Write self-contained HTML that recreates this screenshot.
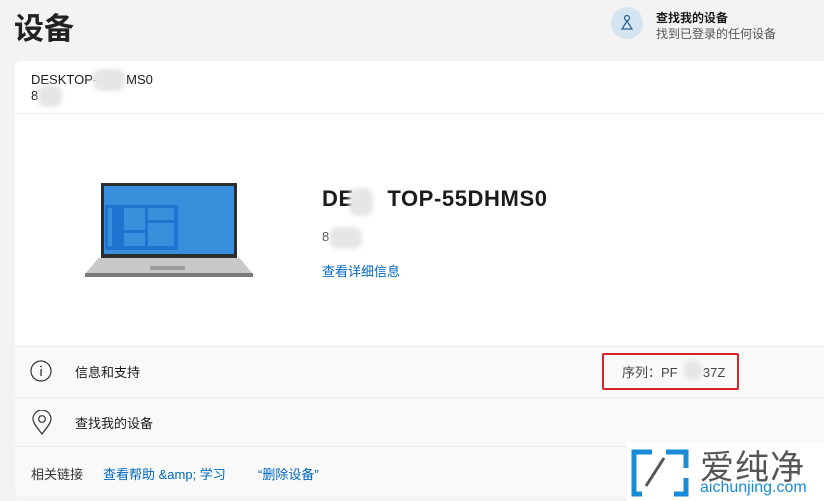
<!DOCTYPE html>
<html><head><meta charset="utf-8"><style>
body{margin:0;width:824px;height:501px;background:#f3f3f3;font-family:"Liberation Sans","Noto Sans CJK SC",sans-serif;position:relative;overflow:hidden;color:#1b1b1b}
.a{position:absolute}
.blur{position:absolute;background:#e6e6e6;border-radius:8px;filter:blur(2px)}
</style></head><body>
<div class="a" style="left:14px;top:4px;font-size:30px;font-weight:bold;color:#222">设备</div>
<div class="a" style="left:611px;top:7px;width:32px;height:32px;border-radius:50%;background:#d5e4f1"></div>
<svg class="a" style="left:619px;top:14px" width="16" height="18" viewBox="0 0 16 18"><circle cx="8" cy="4" r="2.5" fill="none" stroke="#2b5f8f" stroke-width="1.2"/><path d="M8 7 L3 15 H13 Z" fill="none" stroke="#2b5f8f" stroke-width="1.2"/></svg>
<div class="a" style="left:656px;top:9px;font-size:12px;font-weight:bold">查找我的设备</div>
<div class="a" style="left:656px;top:25px;font-size:12px;color:#555">找到已登录的任何设备</div>

<div class="a" style="left:15px;top:61px;width:820px;height:436px;background:#fff;border-radius:6px;overflow:hidden">
 <div class="a" style="left:16px;top:11px;font-size:13px">DESKTOP-5&nbsp;&nbsp;&nbsp;&nbsp;&nbsp;&nbsp;MS0</div>
 <div class="a" style="left:16px;top:27px;font-size:13px">8</div>
 <div class="blur" style="left:78px;top:8px;width:32px;height:22px"></div>
 <div class="blur" style="left:23px;top:24px;width:24px;height:22px"></div>
 <div class="a" style="left:0;top:52px;width:820px;height:1px;background:#ececec"></div>
 <div class="a" style="left:0;top:285px;width:820px;height:151px;background:#f9f9f9"></div>
 <div class="a" style="left:0;top:285px;width:820px;height:1px;background:#ececec"></div>
 <div class="a" style="left:0;top:336px;width:820px;height:1px;background:#ececec"></div>
 <div class="a" style="left:0;top:385px;width:820px;height:1px;background:#ececec"></div>
</div>

<!-- laptop -->
<div class="a" style="left:101px;top:183px;width:136px;height:75px;background:#2d2d2d"></div>
<div class="a" style="left:104px;top:186px;width:130px;height:68px;background:#3a8fdc"></div>
<div class="a" style="left:105px;top:205px;width:73px;height:45px;background:#1f74cf"></div>
<div class="a" style="left:124px;top:208px;width:21px;height:22px;background:#3a8fdc"></div>
<div class="a" style="left:124px;top:233px;width:21px;height:13px;background:#3a8fdc"></div>
<div class="a" style="left:148px;top:208px;width:26px;height:12px;background:#3a8fdc"></div>
<div class="a" style="left:148px;top:223px;width:26px;height:23px;background:#3a8fdc"></div>
<div class="a" style="left:108px;top:208px;width:4px;height:38px;background:#3a8fdc"></div>
<div class="a" style="left:85px;top:258px;width:168px;height:16px;background:#c8c8c8;clip-path:polygon(8% 0,92% 0,100% 100%,0 100%)"></div>
<div class="a" style="left:150px;top:266px;width:35px;height:4px;background:#9d9d9d"></div>
<div class="a" style="left:85px;top:273px;width:168px;height:4px;background:#7a7a7a"></div>

<div class="a" style="left:322px;top:186px;font-size:22px;font-weight:bold;letter-spacing:0.6px">DE&nbsp;&nbsp;&nbsp;&nbsp;&nbsp;TOP-55DHMS0</div>
<div class="blur" style="left:349px;top:188px;width:24px;height:28px"></div>
<div class="a" style="left:322px;top:229px;font-size:13px;color:#555">8</div>
<div class="blur" style="left:330px;top:227px;width:32px;height:22px"></div>
<div class="a" style="left:322px;top:261px;font-size:13px;color:#0067c0">查看详细信息</div>

<svg class="a" style="left:30px;top:360px" width="22" height="22"><circle cx="11" cy="11" r="10" fill="none" stroke="#333" stroke-width="1.2"/><rect x="10.4" y="9" width="1.3" height="7" fill="#333"/><circle cx="11" cy="6.5" r="0.9" fill="#333"/></svg>
<div class="a" style="left:75px;top:362px;font-size:13px">信息和支持</div>
<div class="a" style="left:602px;top:353px;width:133px;height:33px;border:2px solid #d8232a;border-radius:2px"></div>
<div class="a" style="left:622px;top:362px;font-size:13px;color:#444">序列：PF&nbsp;&nbsp;&nbsp;&nbsp;&nbsp;&nbsp;&nbsp;37Z</div>
<div class="blur" style="left:684px;top:360px;width:18px;height:20px"></div>

<svg class="a" style="left:31px;top:410px" width="22" height="26"><path d="M11 24 C4 15 2 12 2 9 A9 9 0 0 1 20 9 C20 12 18 15 11 24Z" fill="none" stroke="#333" stroke-width="1.2"/><circle cx="11" cy="9" r="3.3" fill="none" stroke="#333" stroke-width="1.2"/></svg>
<div class="a" style="left:75px;top:413px;font-size:13px">查找我的设备</div>

<div class="a" style="left:31px;top:464px;font-size:13px;color:#333">相关链接</div>
<div class="a" style="left:103px;top:464px;font-size:13px;color:#0067c0">查看帮助 &amp;amp; 学习</div>
<div class="a" style="left:258px;top:464px;font-size:13px;color:#0067c0">“删除设备”</div>

<div class="a" style="left:627px;top:443px;width:197px;height:58px;background:#fff"></div>
<svg class="a" style="left:630px;top:448px" width="60" height="50"><path d="M22 4 H4 V46 H12 M36 4 H56 V20 M56 30 V46 H44" fill="none" stroke="#1a8bd6" stroke-width="5"/><path d="M16 38 L34 10" stroke="#555" stroke-width="3"/></svg>
<div class="a" style="left:700px;top:440px;font-size:34px;color:#555;letter-spacing:1px">爱纯净</div>
<div class="a" style="left:700px;top:479px;font-size:16px;color:#1a8bd6">aichunjing.com</div>
</body></html>
